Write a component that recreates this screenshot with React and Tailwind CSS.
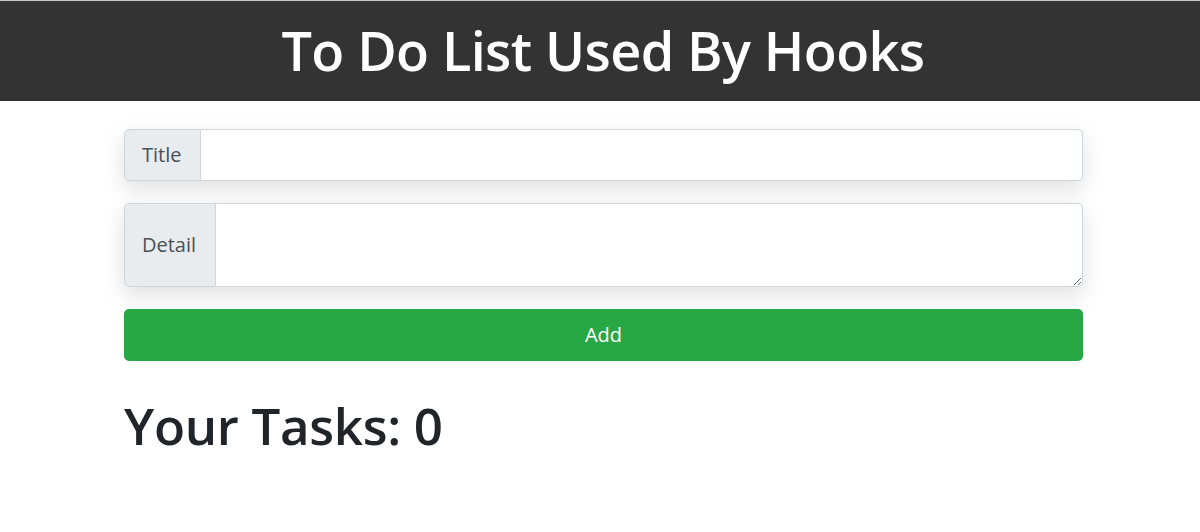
export default function App() {
  const font = { fontFamily: '"Open Sans", "Noto Sans", sans-serif' };
  return (
    <div className="min-h-[532px] bg-white" style={font}>
      <div className="h-[101px] bg-[#333333] border-t border-[#c8c8c8] flex items-center justify-center">
        <h1 className="text-[54px] leading-none font-semibold text-white tracking-[-0.6px] pb-[2px] pl-[6px]">To Do List Used By Hooks</h1>
      </div>
      <div className="ml-[124px] w-[959px] pt-[28px]">
        <div className="flex h-[52px] rounded-[5px] shadow-[0_8px_22px_rgba(0,0,0,0.13)]">
          <div className="flex items-center px-[17px] w-[77px] bg-[#e9ecef] border border-[#ced4da] rounded-l-[5px] text-[20px] text-[#495057]">Title</div>
          <input className="flex-1 border border-l-0 border-[#ced4da] rounded-r-[5px] bg-white outline-none px-4 text-[20px]" />
        </div>
        <div className="flex h-[84px] mt-[22px] rounded-[5px] shadow-[0_8px_22px_rgba(0,0,0,0.13)]">
          <div className="flex items-center px-[17px] w-[92px] bg-[#e9ecef] border border-[#ced4da] rounded-l-[5px] text-[20px] text-[#495057]">Detail</div>
          <textarea className="flex-1 border border-l-0 border-[#ced4da] rounded-r-[5px] bg-white outline-none px-4 text-[20px]" />
        </div>
        <button className="mt-[22px] w-full h-[52px] bg-[#28a745] rounded-[5px] text-white text-[20px] flex items-center justify-center">Add</button>
        <h2 className="mt-[34px] text-[51px] leading-[1.2] font-semibold text-[#212529] tracking-[-0.3px]">Your Tasks: 0</h2>
      </div>
    </div>
  );
}
